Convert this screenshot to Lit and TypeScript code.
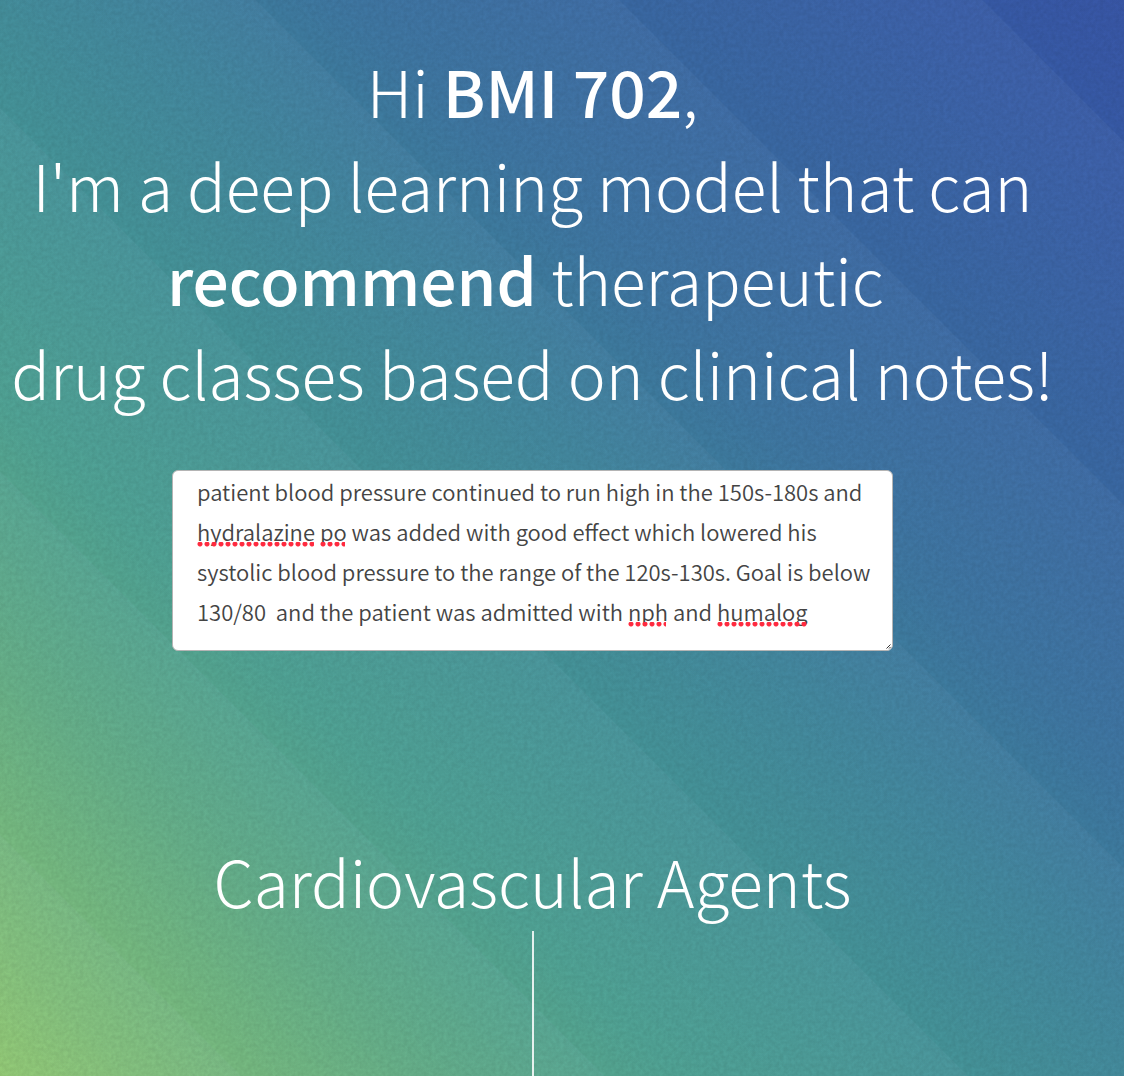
import { LitElement, html, css, svg } from "lit";
import { customElement, state } from "lit/decorators.js";

interface Mark {
  left: number;
  line: number;
  width: number;
}

const NOTE = [
  "patient blood pressure continued to run high in the 150s-180s and",
  "hydralazine po was added with good effect which lowered his",
  "systolic blood pressure to the range of the 120s-130s. Goal is below",
  "130/80  and the patient was admitted with nph and humalog",
].join("\n");

const MARKS: Mark[] = [
  { left: 0, line: 1, width: 117 },
  { left: 123, line: 1, width: 25 },
  { left: 431, line: 3, width: 38 },
  { left: 520, line: 3, width: 91 },
];

@customElement("note-box")
export class NoteBox extends LitElement {
  @state() private pristine = true;

  static styles = css`
    :host {
      display: block;
      position: relative;
    }
    .note {
      display: block;
      box-sizing: border-box;
      width: 100%;
      height: 181px;
      margin: 0;
      padding: 0 8px 20px 24px;
      border: 1px solid #b4b4b4;
      border-radius: 6px;
      background: #fff;
      color: #444;
      font: 350 22px/40px "Noto Sans CJK JP", "Open Sans", sans-serif;
      resize: none;
      overflow: hidden;
      outline: none;
    }
    .marks {
      position: absolute;
      inset: 1px 25px auto;
      pointer-events: none;
    }
    .mark {
      position: absolute;
      height: 5px;
      background: radial-gradient(circle at 3px 2px, #ff2a3f 2px, transparent 3px) 0 0 / 7px 5px;
    }
    .grip {
      position: absolute;
      right: 2px;
      bottom: 2px;
      width: 5px;
      height: 5px;
      pointer-events: none;
    }
  `;

  render() {
    return html`
      <textarea
        class="note"
        aria-label="Clinical note"
        spellcheck="false"
        .value=${NOTE}
        @input=${() => (this.pristine = false)}
      ></textarea>
      ${this.pristine
        ? html`<div class="marks" aria-hidden="true">
            ${MARKS.map(
              (m) => html`<span
                class="mark"
                style="left:${m.left}px;top:${m.line * 40 + 31}px;width:${m.width}px"
              ></span>`,
            )}
          </div>`
        : null}
      <svg class="grip" viewBox="0 0 5 5" aria-hidden="true">
        ${svg`<path d="M0.5 4.5L4.5 0.5M3 4.5L4.5 3" stroke="#333" fill="none"/>`}
      </svg>
    `;
  }
}

@customElement("app-root")
export class AppRoot extends LitElement {
  static styles = css`
    :host {
      display: block;
      color: #fff;
      font-family: "Noto Sans CJK JP", "Open Sans", sans-serif;
      font-weight: 300;
    }
    .page {
      position: relative;
      display: flex;
      flex-direction: column;
      align-items: center;
      box-sizing: border-box;
      min-height: 100vh;
      padding: 43px 59px 0 0;
      overflow: hidden;
      background:
        repeating-linear-gradient(
          45deg,
          rgba(190, 220, 255, 0) -86px,
          rgba(190, 220, 255, 0.05) 170px,
          rgba(190, 220, 255, 0) 171px
        ),
        linear-gradient(
          45deg,
          #93ca74 0%,
          #77ba80 11%,
          #62ad88 20%,
          #4fa294 31%,
          #469598 43%,
          #40869c 54%,
          #3d75a1 65%,
          #3a68a3 78%,
          #385da7 91%,
          #3654a5 100%
        );
    }
    .grain {
      position: absolute;
      inset: 0;
      width: 100%;
      height: 100%;
      opacity: 0.06;
      pointer-events: none;
    }
    .content {
      position: relative;
      flex: 1;
      display: flex;
      flex-direction: column;
      align-items: center;
      width: 100%;
    }
    .title,
    .result {
      margin: 0;
      font-size: 64px;
      line-height: 94px;
      font-weight: 300;
      text-align: center;
      white-space: nowrap;
    }
    .result {
      margin-bottom: 4px;
    }
    .strong {
      font-weight: 500;
    }
    .entry {
      width: 100%;
      max-width: 721px;
      margin: 51px 0 182px;
    }
    .stem {
      flex: 1;
      width: 2px;
      min-height: 140px;
      background: rgba(255, 255, 255, 0.85);
    }
  `;

  render() {
    return html`
      <main class="page">
        <svg class="grain" aria-hidden="true">
          <filter id="noise">
            <feTurbulence type="fractalNoise" baseFrequency="0.25" numOctaves="2" />
            <feColorMatrix values="0 0 0 0 0  0 0 0 0 0  0 0 0 0 0  2 0 0 0 -0.5" />
          </filter>
          <rect width="100%" height="100%" filter="url(#noise)" />
        </svg>
        <div class="content">
          <h1 class="title">
            Hi <strong class="strong">BMI 702</strong>,<br />
            I'm a deep learning model that can<br />
            <strong class="strong">recommend</strong> therapeutic&nbsp;<br />
            drug classes based on clinical notes!
          </h1>
          <note-box class="entry"></note-box>
          <h2 class="result">Cardiovascular Agents</h2>
          <div class="stem"></div>
        </div>
      </main>
    `;
  }
}
